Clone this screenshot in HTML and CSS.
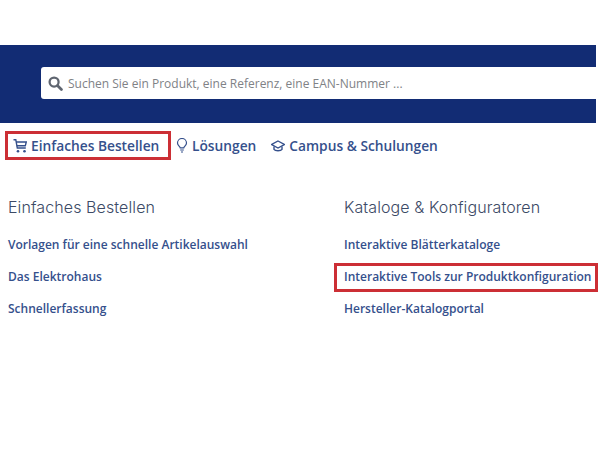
FILE: index.html
```html
<!DOCTYPE html>
<html lang="de">
<head>
  <meta charset="UTF-8">
  <meta name="viewport" content="width=device-width, initial-scale=1.0">
  <title>Einfaches Bestellen</title>
  <link rel="stylesheet" href="styles.css">
</head>
<body>
  <header class="banner">
    <div class="search">
      <svg class="search-icon" viewBox="0 0 16 16" width="15" height="15">
        <circle cx="6.5" cy="6.5" r="4.8" fill="none" stroke="#5f6570" stroke-width="2.4"/>
        <path d="M10.300 10.300l4 4" stroke="#5f6570" stroke-width="3" stroke-linecap="round"/>
      </svg>
      <span class="search-text">Suchen Sie ein Produkt, eine Referenz, eine EAN-Nummer ...</span>
    </div>
  </header>

  <nav class="nav">
    <a class="nav-item nav-active">
      <svg viewBox="0 0 14 16" width="14" height="16" fill="none" stroke="#35508c" stroke-width="1.400">
        <path d="M0.500 1.700h2.300l1.500 8.300h8.500"/>
        <path d="M3 4h10.300l-1 3.700H3.800"/>
        <circle cx="5" cy="13.300" r="1.300" fill="#35508c" stroke="none"/>
        <circle cx="11.500" cy="13.300" r="1.300" fill="#35508c" stroke="none"/>
      </svg>
      Einfaches Bestellen
    </a>
    <a class="nav-item">
      <svg viewBox="0 0 12 16" width="12" height="16" fill="none" stroke="#35508c" stroke-width="1.200">
        <path d="M4.200 9.800C3.900 8.300 1.500 7.400 1.500 5a4.500 4.500 0 0 1 9 0c0 2.400-2.400 3.300-2.700 4.800z"/>
        <path d="M4.200 12h3.600M5 14h2"/>
      </svg>
      Lösungen
    </a>
    <a class="nav-item">
      <svg viewBox="0 0 14 14" width="14" height="14" fill="none" stroke="#35508c" stroke-width="1.400">
        <path d="M7 2L13.300 5.500 7 9 0.700 5.500z"/>
        <path d="M3 7.500v2.800c1.200 1.900 6.800 1.900 8 0V7.500"/>
      </svg>
      Campus &amp; Schulungen
    </a>
  </nav>

  <main class="columns">
    <section class="column">
      <h2>Einfaches Bestellen</h2>
      <ul>
        <li><a>Vorlagen für eine schnelle Artikelauswahl</a></li>
        <li><a>Das Elektrohaus</a></li>
        <li><a>Schnellerfassung</a></li>
      </ul>
    </section>
    <section class="column column-right">
      <h2>Kataloge &amp; Konfiguratoren</h2>
      <ul>
        <li><a>Interaktive Blätterkataloge</a></li>
        <li class="marked"><a>Interaktive Tools zur Produktkonfiguration</a></li>
        <li><a>Hersteller-Katalogportal</a></li>
      </ul>
    </section>
  </main>
</body>
</html>
```

FILE: styles.css
```css
*, *::after {
  box-sizing: border-box;
}

html, body {
  height: 100%;
}

body {
  margin: 0;
  padding-top: 45px;
  background: #fff;
  font-family: "Open Sans", sans-serif;
  color: #35508c;
  overflow: hidden;
}

.banner {
  width: 596px;
  height: 78px;
  padding: 22px 0 24px 41px;
  background: #122c74;
}

.search {
  display: flex;
  align-items: center;
  gap: 5px;
  height: 32px;
  padding-left: 7px;
  background: #fff;
  border-radius: 3px 0 0 3px;
}

.search-text {
  font-size: 12px;
  color: #808286;
}

.nav {
  display: flex;
  align-items: center;
  height: 29px;
  margin: 8px 0 0 5px;
}

.nav-item {
  display: flex;
  align-items: center;
  gap: 4px;
  height: 29px;
  margin-right: 15px;
  font-size: 13.75px;
  font-weight: 600;
}

.nav-active {
  width: 166px;
  margin-right: 5px;
  padding-left: 5px;
  border: 3px solid #cc2f35;
}

.columns {
  display: flex;
  margin-top: 37px;
  padding-left: 8px;
}

.column {
  width: 336px;
}

.column-right {
  width: 256px;
}

h2 {
  margin: 0 0 11px;
  font-family: Inter, sans-serif;
  font-size: 16px;
  font-weight: 300;
  letter-spacing: 0.1px;
  line-height: 20px;
  color: #3c4a66;
}

ul {
  margin: 0;
  padding: 0;
  list-style: none;
}

li {
  display: flex;
  align-items: center;
  height: 32px;
  font-size: 12px;
  font-weight: 600;
  white-space: nowrap;
}

.marked {
  position: relative;
}

.marked::after {
  content: "";
  position: absolute;
  left: -10px;
  top: 3px;
  width: 264px;
  height: 29px;
  border: 3px solid #cc2f35;
}
```
